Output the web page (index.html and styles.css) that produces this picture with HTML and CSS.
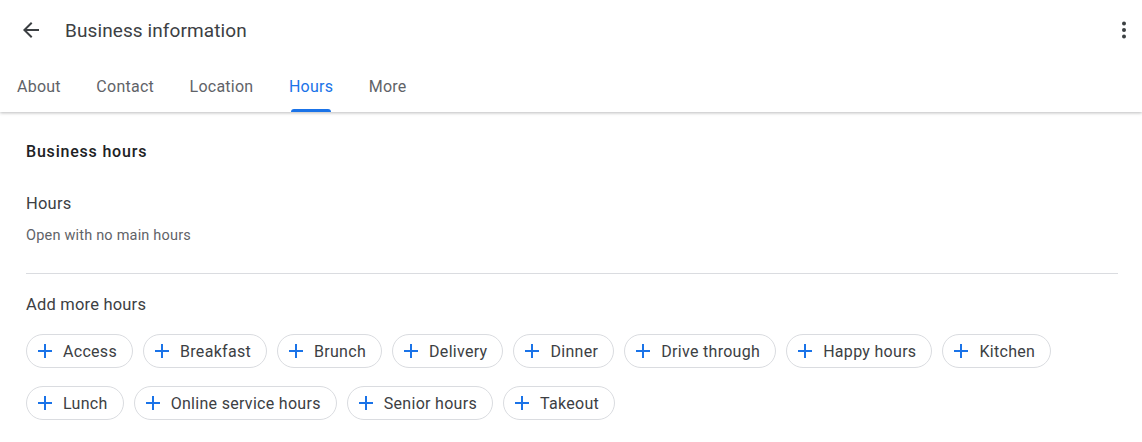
FILE: index.html
```html
<!DOCTYPE html>
<html>
<head>
<meta charset="utf-8">
<link rel="stylesheet" href="styles.css">
</head>
<body>
<header class="topbar">
  <div class="titlerow">
    <button class="iconbtn back" aria-label="Back">
      <svg width="24" height="24" viewBox="0 0 24 24"><path d="M20 11H7.83l5.59-5.59L12 4l-8 8 8 8 1.41-1.41L7.83 13H20v-2z" fill="#3c4043"/></svg>
    </button>
    <h1 class="title">Business information</h1>
    <button class="iconbtn kebab" aria-label="More options">
      <svg width="24" height="24" viewBox="0 0 24 24"><circle cx="12" cy="5.5" r="2" fill="#3c4043"/><circle cx="12" cy="12" r="2" fill="#3c4043"/><circle cx="12" cy="18.5" r="2" fill="#3c4043"/></svg>
    </button>
  </div>
  <nav class="tabs">
    <a class="tab">About</a>
    <a class="tab">Contact</a>
    <a class="tab">Location</a>
    <a class="tab active">Hours</a>
    <a class="tab">More</a>
  </nav>
</header>
<main class="content">
  <h2 class="section-title">Business hours</h2>
  <div class="field">
    <div class="field-label">Hours</div>
    <div class="field-value">Open with no main hours</div>
  </div>
  <hr class="divider">
  <div class="field-label more">Add more hours</div>
  <div class="chips">
    <button class="chip"><span class="plus"></span>Access</button>
    <button class="chip"><span class="plus"></span>Breakfast</button>
    <button class="chip"><span class="plus"></span>Brunch</button>
    <button class="chip"><span class="plus"></span>Delivery</button>
    <button class="chip"><span class="plus"></span>Dinner</button>
    <button class="chip"><span class="plus"></span>Drive through</button>
    <button class="chip"><span class="plus"></span>Happy hours</button>
    <button class="chip"><span class="plus"></span>Kitchen</button>
    <button class="chip"><span class="plus"></span>Lunch</button>
    <button class="chip"><span class="plus"></span>Online service hours</button>
    <button class="chip"><span class="plus"></span>Senior hours</button>
    <button class="chip"><span class="plus"></span>Takeout</button>
  </div>
</main>
</body>
</html>
```

FILE: styles.css
```css
* { box-sizing: border-box; }
html, body { margin: 0; padding: 0; background: #fff; }
body { font-family: Roboto, "Open Sans", Arial, sans-serif; color: #3c4043; width: 1142px; overflow: hidden; }

.topbar {
  box-shadow: 0 1px 3px rgba(60,64,67,0.35);
  position: relative;
  z-index: 1;
  background: #fff;
}
.titlerow {
  height: 60px;
  display: flex;
  align-items: center;
  padding: 0 6px 0 19px;
}
.iconbtn {
  border: 0;
  background: none;
  padding: 0;
  width: 24px;
  height: 24px;
  display: flex;
  align-items: center;
  justify-content: center;
}
.title {
  margin: 0 0 0 22px;
  font-size: 19px;
  font-weight: 400;
  color: #3c4043;
  flex: 1;
  letter-spacing: 0.1px;
}

.tabs {
  display: flex;
  height: 52px;
  padding-left: 17px;
  gap: 35.5px;
}
.tab {
  position: relative;
  font-size: 16px;
  color: #5f6368;
  font-weight: 400;
  display: flex;
  align-items: center;
  letter-spacing: 0.25px;
}
.tab.active { color: #1a73e8; }
.tab.active::after {
  content: "";
  position: absolute;
  left: 2px;
  right: 2px;
  bottom: 0;
  height: 3px;
  background: #1a73e8;
  border-radius: 3px 3px 0 0;
}

.content { padding: 29px 24px 0 26px; }
.section-title {
  margin: 0;
  font-size: 16px;
  font-weight: 500;
  color: #202124;
  line-height: 22px;
  letter-spacing: 0.8px;
}
.field { margin-top: 30px; }
.field-label {
  font-size: 16.5px;
  color: #3c4043;
  line-height: 22px;
  letter-spacing: 0.2px;
}
.field-value {
  margin-top: 11px;
  font-size: 14.5px;
  color: #5f6368;
  line-height: 20px;
  letter-spacing: 0.2px;
}
.divider {
  border: 0;
  border-top: 1px solid #dadce0;
  margin: 27px 0 0 0;
}
.more { margin-top: 20px; }
.chips {
  display: flex;
  flex-wrap: wrap;
  column-gap: 10px;
  row-gap: 18px;
  margin-top: 18px;
  padding-right: 60px;
}
.chip {
  height: 34px;
  border: 1px solid #dadce0;
  border-radius: 17px;
  background: #fff;
  display: flex;
  align-items: center;
  padding: 0 15px 0 11px;
  font-family: inherit;
  font-size: 16px;
  font-weight: 400;
  color: #3c4043;
  letter-spacing: 0.3px;
}
.plus {
  position: relative;
  width: 14px;
  height: 14px;
  margin-right: 11px;
}
.plus::before, .plus::after {
  content: "";
  position: absolute;
  background: #1a73e8;
}
.plus::before { left: 6px; top: 0; width: 2px; height: 14px; }
.plus::after { top: 6px; left: 0; height: 2px; width: 14px; }
```
